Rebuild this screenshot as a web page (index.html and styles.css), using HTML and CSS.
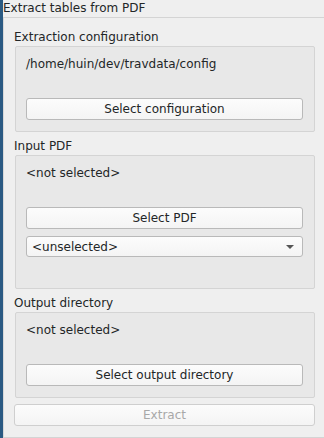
FILE: index.html
```html
<!DOCTYPE html>
<html lang="en">
<head>
    <meta charset="UTF-8">
    <title>Extract tables from PDF</title>
    <link rel="stylesheet" href="styles.css">
</head>
<body>
    <div class="window">
        <div class="title">Extract tables from PDF</div>
        <div class="panel">
            <div class="group">
                <div class="group-title">Extraction configuration</div>
                <div class="group-box">
                    <div class="value">/home/huin/dev/travdata/config</div>
                    <button class="btn">Select configuration</button>
                </div>
            </div>

            <div class="group">
                <div class="group-title">Input PDF</div>
                <div class="group-box pdf-box">
                    <div class="value">&lt;not selected&gt;</div>
                    <button class="btn">Select PDF</button>
                    <div class="combo">
                        <span>&lt;unselected&gt;</span>
                        <span class="arrow"></span>
                    </div>
                </div>
            </div>

            <div class="group">
                <div class="group-title">Output directory</div>
                <div class="group-box">
                    <div class="value">&lt;not selected&gt;</div>
                    <button class="btn">Select output directory</button>
                </div>
            </div>

            <button class="btn extract" disabled>Extract</button>
        </div>
    </div>
</body>
</html>
```

FILE: styles.css
```css
body {
    margin: 0;
    background: #efefef;
    font-family: "DejaVu Sans", sans-serif;
    font-size: 12px;
    color: #232627;
}
.window {
    height: 438px;
    border-left: 3px solid #2b5a83;
    box-sizing: border-box;
    display: flex;
    flex-direction: column;
}
.title {
    height: 17px;
    line-height: 16px;
    border-bottom: 1px solid #d4d4d4;
}
.panel {
    height: 420px;
    box-sizing: border-box;
    border-left: 1px solid #d8d8d8;
    border-bottom: 1px solid #d4d4d4;
    padding: 10px 9px 0 10px;
    display: flex;
    flex-direction: column;
}
.group-title {
    height: 18px;
    line-height: 18px;
}
.group-box {
    height: 86px;
    box-sizing: border-box;
    background: #e8e8e8;
    border: 1px solid #d4d4d4;
    border-radius: 2px;
    margin-left: 1px;
    padding: 8px 11px 0 10px;
    display: flex;
    flex-direction: column;
}
.pdf-box { height: 134px; }
.value {
    line-height: 18px;
    height: 18px;
}
.group-box .btn { margin-top: 25px; }
.group + .group { margin-top: 5px; }
.btn {
    display: block;
    width: 100%;
    height: 22px;
    font: inherit;
    color: #232627;
    background: linear-gradient(#fcfcfc, #f4f4f4);
    border: 1px solid #b9b9b9;
    border-radius: 3px;
    padding: 0;
}
.combo {
    margin-top: 7px;
    height: 21px;
    box-sizing: border-box;
    display: flex;
    align-items: center;
    justify-content: space-between;
    padding: 0 8px 0 5px;
    background: linear-gradient(#fcfcfc, #f4f4f4);
    border: 1px solid #b9b9b9;
    border-radius: 3px;
}
.arrow {
    width: 0;
    height: 0;
    border-left: 4px solid transparent;
    border-right: 4px solid transparent;
    border-top: 4px solid #555;
}
.extract {
    margin-top: 6px;
    width: auto;
    color: #a8a8a8;
    border-color: #cfcfcf;
}
```
